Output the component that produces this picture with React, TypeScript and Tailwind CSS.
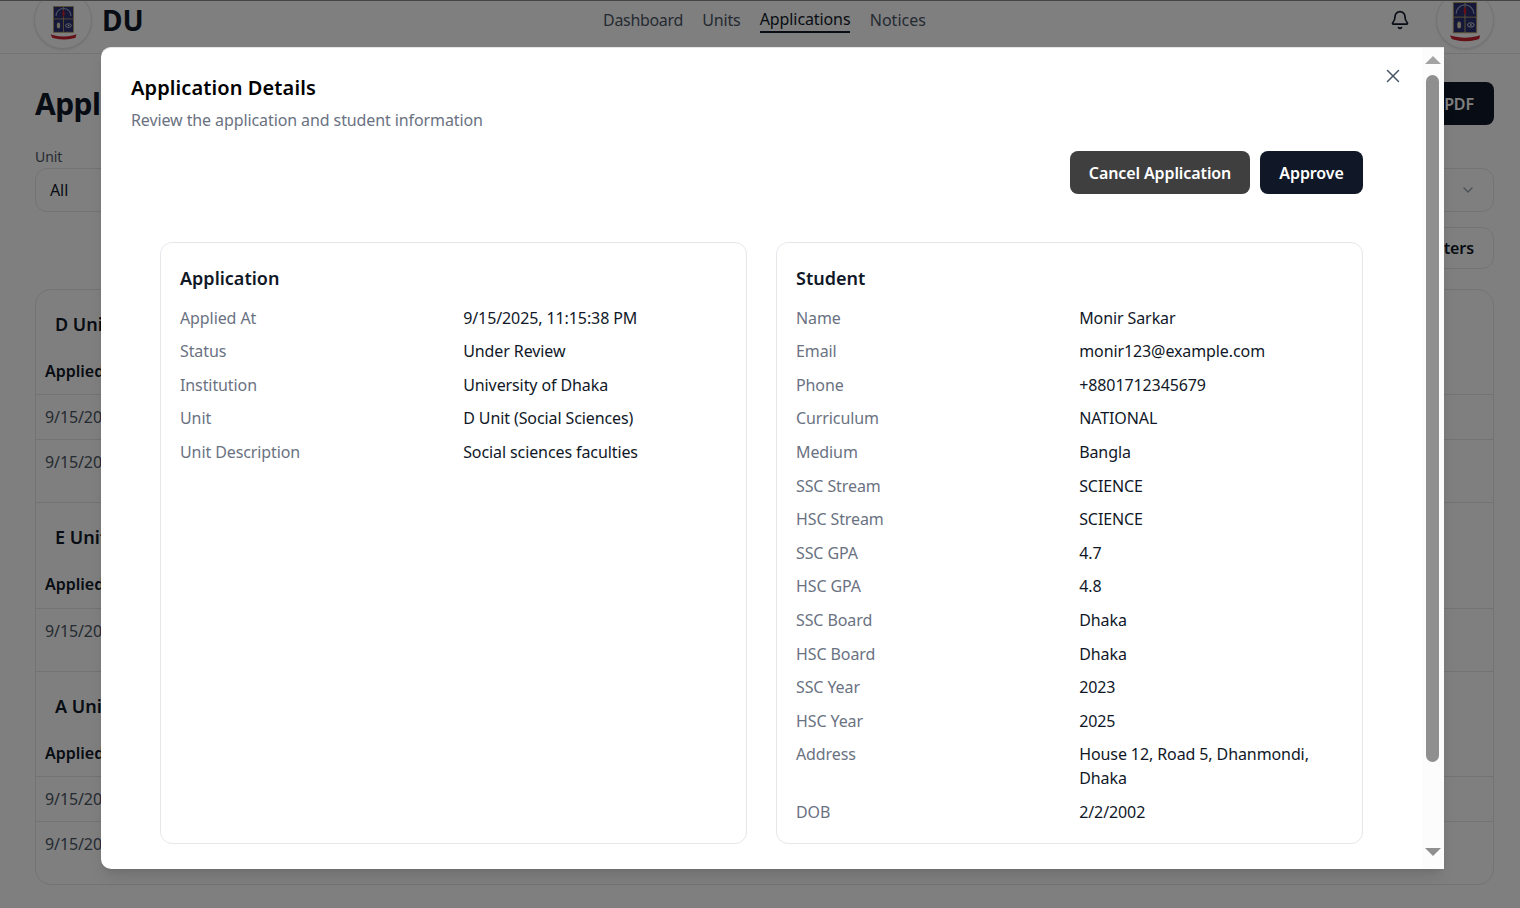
import { Bell, ChevronDown, X } from "lucide-react";

const applicationRows = [
  ["Applied At", "9/15/2025, 11:15:38 PM"],
  ["Status", "Under Review"],
  ["Institution", "University of Dhaka"],
  ["Unit", "D Unit (Social Sciences)"],
  ["Unit Description", "Social sciences faculties"],
];

const studentRows = [
  ["Name", "Monir Sarkar"],
  ["Email", "monir123@example.com"],
  ["Phone", "+8801712345679"],
  ["Curriculum", "NATIONAL"],
  ["Medium", "Bangla"],
  ["SSC Stream", "SCIENCE"],
  ["HSC Stream", "SCIENCE"],
  ["SSC GPA", "4.7"],
  ["HSC GPA", "4.8"],
  ["SSC Board", "Dhaka"],
  ["HSC Board", "Dhaka"],
  ["SSC Year", "2023"],
  ["HSC Year", "2025"],
  ["Address", "House 12, Road 5, Dhanmondi, Dhaka"],
  ["DOB", "2/2/2002"],
];

function Crest({ className }: { className: string }) {
  return (
    <svg viewBox="0 0 32 42" className={className}>
      <rect x="4" y="0.5" width="24" height="31" fill="#2a3170" stroke="#b9a36a" />
      <path d="M16 1v30M4.5 15.5h23" stroke="#b9a36a" strokeWidth="1" />
      <path d="M7 12a9 9 0 0 1 18 0" fill="none" stroke="#9aa2c8" strokeWidth="1.3" />
      <path d="M16 4l1.6 5-1.6 5-1.6-5z" fill="#c8202c" />
      <ellipse cx="10" cy="23.5" rx="2" ry="3.6" fill="#d8d2b8" />
      <ellipse cx="22" cy="23.5" rx="3.4" ry="2.2" fill="none" stroke="#dddddd" strokeWidth="1" />
      <circle cx="22" cy="23.5" r="0.9" fill="#dddddd" />
      <path d="M0.5 34l3.5 1c8 2 16 2 24 0l3.5-1-1 4-3.500 1c-7 1.600-14 1.600-21 0l-3.500-1z" fill="#c8202c" />
    </svg>
  );
}

function Logo({ crest }: { crest: string }) {
  return (
    <div className="flex h-[58px] w-[58px] shrink-0 items-start justify-center rounded-full border border-gray-200 bg-white shadow-sm">
      <Crest className={crest} />
    </div>
  );
}

function UnitGroup({ name, rows, last }: { name: string; rows: number; last?: boolean }) {
  return (
    <div className={last ? "" : "border-b border-gray-200 pb-[18.4px]"}>
      <h3 className="pl-[19px] pt-[20px] text-lg font-semibold leading-7 tracking-normal text-gray-900">{name}</h3>
      <div className="mt-[21px] flex h-[24px] items-center pl-[9px] font-semibold tracking-normal text-gray-900">Applied At</div>
      <div className="mt-[11.45px]">
        {Array.from({ length: rows }).map((_, i) => (
          <div key={i} className="flex h-[44.8px] items-center border-t border-gray-200 pl-[9px] text-gray-600">
            9/15/2025
          </div>
        ))}
      </div>
    </div>
  );
}

function InfoCard({ title, rows }: { title: string; rows: string[][] }) {
  return (
    <div className="h-[602px] flex-1 rounded-xl border border-gray-200 bg-white px-[19px] pt-[21px]">
      <h3 className="text-lg font-semibold leading-7 tracking-normal text-gray-900">{title}</h3>
      <dl className="mt-[13.6px] grid grid-cols-[283.2px_1fr] gap-y-[9.6px]">
        {rows.map(([label, value]) => (
          <div key={label} className="contents">
            <dt className="text-gray-500">{label}</dt>
            <dd className="pr-5 text-gray-900">{value}</dd>
          </div>
        ))}
      </dl>
    </div>
  );
}

export default function App() {
  return (
    <div className="relative h-[908px] w-[1520px] overflow-hidden bg-white font-['Noto_Sans',sans-serif] text-base tracking-[-0.1px]">
      <header className="-mt-[13px] flex h-[67px] items-center border-b border-gray-200 pl-[34px] pr-[26px]">
        <div className="flex flex-1 items-center gap-[10px]">
          <Logo crest="mt-[14px] h-[35px] w-[27px]" />
          <span className="text-[28px] font-bold tracking-normal text-gray-900">DU</span>
        </div>
        <nav className="ml-px flex items-center gap-[19.3px] text-gray-600">
          <span className="tracking-[-0.33px]">Dashboard</span>
          <span className="tracking-[-0.2px]">Units</span>
          <span className="border-b-2 border-gray-900 text-gray-900">Applications</span>
          <span className="tracking-normal">Notices</span>
        </nav>
        <div className="flex flex-1 items-center justify-end gap-[26px]">
          <Bell className="h-5 w-5 text-gray-900" />
          <Logo crest="mt-[10px] h-[41px] w-[32px]" />
        </div>
      </header>

      <main className="pl-[35px] pr-[26px]">
        <div className="mt-[28px] flex h-[43px] items-center justify-between">
          <h1 className="text-3xl font-bold tracking-[-0.6px] text-gray-900">Applications</h1>
          <button className="h-[43px] rounded-lg bg-gray-900 px-5 font-semibold text-white">Export PDF</button>
        </div>
        <div className="mt-[22px] text-sm leading-5 text-gray-600">Unit</div>
        <div className="mt-[1px] flex h-[44px] items-center justify-between rounded-xl border border-gray-200 pl-[14px] pr-[17px] text-gray-900">
          All
          <ChevronDown className="h-4 w-4 text-gray-400" />
        </div>
        <div className="mt-[15px] flex justify-end">
          <button className="h-[42px] rounded-xl border border-gray-200 pl-5 pr-[19px] font-semibold text-gray-900">Clear Filters</button>
        </div>
        <section className="mt-[20px] h-[596px] rounded-2xl border border-gray-200">
          <UnitGroup name="D Unit" rows={2} />
          <UnitGroup name="E Unit" rows={1} />
          <UnitGroup name="A Unit" rows={2} last />
        </section>
      </main>

      <div className="absolute inset-0 bg-black/50" />
      <div className="absolute inset-x-0 top-0 h-px bg-[#444444]" />

      <div className="absolute left-[101px] top-[47px] flex h-[822px] w-[1343px] overflow-hidden rounded-l-[10px] border-t border-gray-200 bg-white shadow-lg">
        <div className="relative flex-1 pl-[30px] pr-[59px] pt-[26px]">
          <h2 className="text-xl font-semibold leading-7 tracking-[0.1px] text-black">Application Details</h2>
          <p className="mt-[6px] leading-6 text-gray-500">Review the application and student information</p>
          <div className="mt-[19px] flex justify-end gap-2.5">
            <button className="h-[43px] w-[180px] rounded-lg bg-[#3f3f3f] font-semibold text-white">Cancel Application</button>
            <button className="h-[43px] w-[103px] rounded-lg bg-gray-900 font-semibold text-white">Approve</button>
          </div>
          <div className="ml-[29px] mt-[48px] flex gap-[29px]">
            <InfoCard title="Application" rows={applicationRows} />
            <InfoCard title="Student" rows={studentRows} />
          </div>
          <X strokeWidth={1.6} className="absolute right-[18px] top-[17px] h-[22px] w-[22px] text-gray-600" />
        </div>
        <div className="flex w-[22px] shrink-0 flex-col items-center bg-[#fcfcfc] pr-px pt-[8px]">
          <svg viewBox="0 0 16 8" className="h-2 w-4 fill-[#a3a3a3]">
            <path d="M8 0l8 8H0z" />
          </svg>
          <div className="mt-[11px] h-[687px] w-[13px] rounded-full bg-[#8f8f8f]" />
          <svg viewBox="0 0 16 8" className="mt-[86px] h-2 w-4 fill-[#8f8f8f]">
            <path d="M8 8l8-8H0z" />
          </svg>
        </div>
      </div>
    </div>
  );
}
